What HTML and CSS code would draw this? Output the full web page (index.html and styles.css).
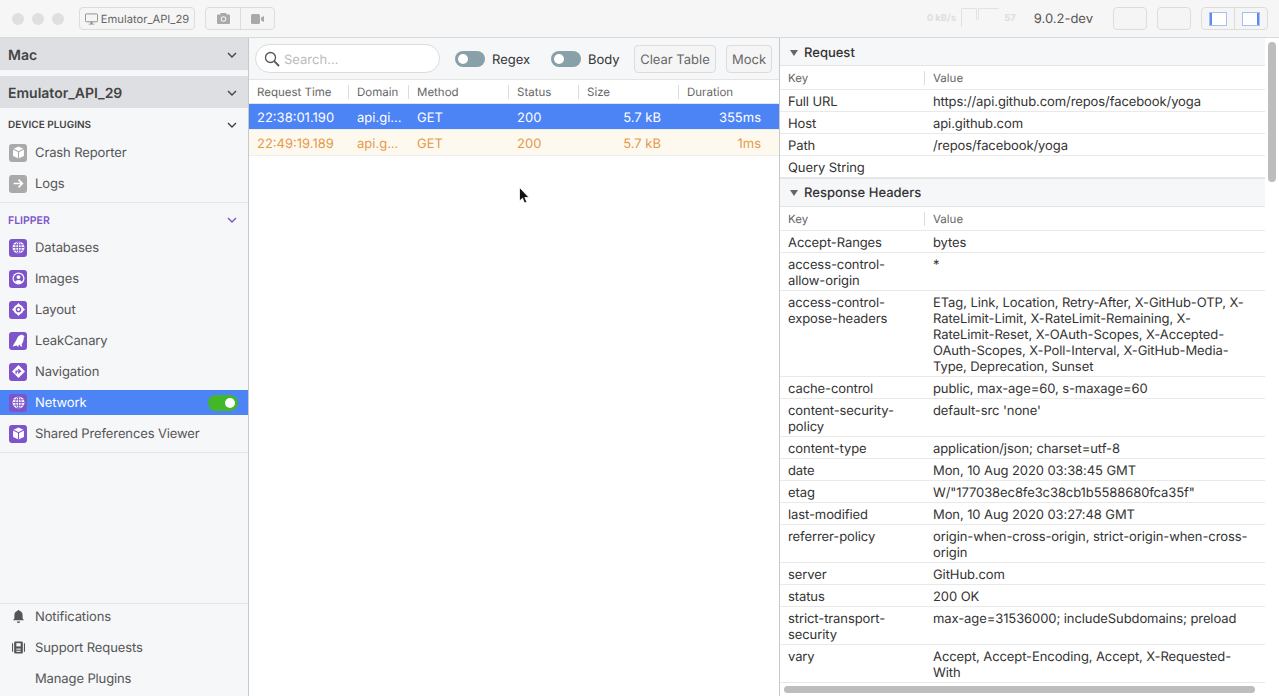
FILE: index.html
```html
<!DOCTYPE html>
<html lang="en">
<head>
<meta charset="utf-8">
<title>Flipper</title>
<link rel="stylesheet" href="styles.css">
</head>
<body>
<div class="app">
  <header class="titlebar">
    <div class="lights"><i></i><i></i><i></i></div>
    <button class="btn device"><svg width="13" height="12" viewBox="0 0 14 12"><path d="M1.500 0.500h11a1 1 0 0 1 1 1v6.500a1 1 0 0 1-1 1h-11a1 1 0 0 1-1-1v-6.500a1 1 0 0 1 1-1z" fill="none" stroke="#8a8a8a"/><path d="M4 11h6v1H4zM6 9h2v2H6z" fill="#8a8a8a"/></svg>Emulator_API_29</button>
    <div class="group">
      <button class="seg cam"><svg width="13" height="11" viewBox="0 0 13 11"><path d="M4 0h5l1 1.500h2a1 1 0 0 1 1 1V10a1 1 0 0 1-1 1H1a1 1 0 0 1-1-1V2.500a1 1 0 0 1 1-1h2z" fill="#a9a9a9"/><circle cx="6.500" cy="6" r="2.800" fill="#f3f3f4"/><circle cx="6.500" cy="6" r="1.800" fill="#a9a9a9"/></svg></button>
      <button class="seg cam"><svg width="13" height="10" viewBox="0 0 13 10"><rect width="9" height="10" rx="1.500" fill="#a9a9a9"/><path d="M10 3.500l3-1.500v6l-3-1.500z" fill="#a9a9a9"/></svg></button>
    </div>
    <div class="spacer"></div>
    <div class="stats">
      <span class="rate">0 kB/s</span>
      <svg width="38" height="20" viewBox="0 0 38 20"><path d="M0.500 20V1.500H15.500V12H17.500V1.500H38" fill="none" stroke="#e2e2e3"/></svg>
      <span class="rate">57</span>
    </div>
    <span class="version">9.0.2-dev</span>
    <button class="btn blank"></button>
    <button class="btn blank"></button>
    <div class="group layout">
      <button class="seg wide"><svg width="18" height="14" viewBox="0 0 18 14"><rect x="0.500" y="0.500" width="17" height="13" fill="#fff" stroke="#a4bff2"/><rect x="1" y="1" width="2" height="12" fill="#5a8cf0"/></svg></button>
      <button class="seg wide"><svg width="18" height="14" viewBox="0 0 18 14"><rect x="0.500" y="0.500" width="17" height="13" fill="#fff" stroke="#a4bff2"/><rect x="15" y="1" width="2" height="12" fill="#5a8cf0"/></svg></button>
    </div>
  </header>

  <div class="main">
    <aside class="sidebar">
      <div class="dev-head">Mac<svg class="chev" viewBox="0 0 10 6"><path d="M1 1l4 4 4-4" fill="none" stroke="#444" stroke-width="1.400"/></svg></div>
      <div class="dev-head second">Emulator_API_29<svg class="chev" viewBox="0 0 10 6"><path d="M1 1l4 4 4-4" fill="none" stroke="#444" stroke-width="1.400"/></svg></div>
      <div class="section">
        <div class="sec-title dark">DEVICE PLUGINS<svg class="chev" viewBox="0 0 10 6"><path d="M1 1l4 4 4-4" fill="none" stroke="#444" stroke-width="1.400"/></svg></div>
        <div class="item"><span class="ico grey"><svg viewBox="0 0 12 12"><path d="M6 .5l5 2.300v6.400l-5 2.300-5-2.300V2.800z" fill="#fff"/><path d="M1 2.800l5 2.400 5-2.400M6 5.200v6.300" fill="none" stroke="#aaa"/></svg></span>Crash Reporter</div>
        <div class="item"><span class="ico grey"><svg viewBox="0 0 12 12"><path d="M1.500 6h8M6 2.500L9.500 6 6 9.500" fill="none" stroke="#fff" stroke-width="1.600"/></svg></span>Logs</div>
      </div>
      <div class="section flipper">
        <div class="sec-title purple">FLIPPER<svg class="chev" viewBox="0 0 10 6"><path d="M1 1l4 4 4-4" fill="none" stroke="#7d54c9" stroke-width="1.400"/></svg></div>
        <div class="item"><span class="ico"><svg viewBox="0 0 12 12"><use href="#globe"/></svg></span>Databases</div>
        <div class="item"><span class="ico"><svg viewBox="0 0 12 12"><circle cx="6" cy="6" r="5.500" fill="#fff"/><circle cx="6" cy="6" r="4.400" fill="#7d54c9"/><circle cx="6" cy="4.700" r="1.800" fill="#fff"/><path d="M2.800 9a3.500 2.600 0 0 1 6.400 0 4.200 4.200 0 0 1-6.400 0z" fill="#fff"/></svg></span>Images</div>
        <div class="item"><span class="ico"><svg viewBox="0 0 12 12"><path d="M6 0l1.400 1.600A4.600 4.600 0 0 1 10.400 4.600L12 6l-1.600 1.400a4.600 4.600 0 0 1-3 3L6 12l-1.400-1.600a4.600 4.600 0 0 1-3-3L0 6l1.600-1.400a4.600 4.600 0 0 1 3-3z" fill="#fff"/><circle cx="6" cy="6" r="2.600" fill="#7d54c9"/><circle cx="6" cy="6" r="1.300" fill="#fff"/></svg></span>Layout</div>
        <div class="item"><span class="ico"><svg viewBox="0 0 12 12"><path d="M.5 11.500L4 5.500C5 3 6.500 1 9 .8c1 0 1.600.5 1.900 1.200l1 .5-1 .6c0 2.400-.6 5-2 6.400l.6 2H8l-.7-1.600-1.300.3.400 1.300H5L4.500 10.500z" fill="#fff"/></svg></span>LeakCanary</div>
        <div class="item"><span class="ico"><svg viewBox="0 0 12 12"><path d="M6 0l6 6-6 6-6-6z" fill="#fff"/><path d="M3.800 8V5.700h3M5.700 3.800L7.800 5.700 5.700 7.700" fill="none" stroke="#7d54c9" stroke-width="1.200"/></svg></span>Navigation</div>
        <div class="item active"><span class="ico"><svg viewBox="0 0 12 12"><use href="#globe"/></svg></span>Network<span class="pill"><i></i></span></div>
        <div class="item"><span class="ico"><svg viewBox="0 0 12 12"><path d="M6 .5l5 2.300v6.400l-5 2.300-5-2.300V2.800z" fill="#fff"/><path d="M1 2.800l5 2.400 5-2.400M6 5.200v6.300" fill="none" stroke="#7d54c9"/></svg></span>Shared Preferences Viewer</div>
      </div>
      <div class="side-fill"></div>
      <div class="side-bottom">
        <div class="item"><span class="ico plain"><svg viewBox="0 0 12 12"><path d="M6 0c.6 0 1 .4 1 1 2 .5 2.800 2 2.800 4v2.500L11 9.500H1l1.200-2V5c0-2 .8-3.500 2.800-4 0-.6.4-1 1-1zM4.500 10.500h3a1.500 1.500 0 0 1-3 0z" fill="#555"/></svg></span>Notifications</div>
        <div class="item"><span class="ico plain"><svg viewBox="0 0 12 12"><path d="M0 2h1v8H0zM11 2h1v8h-1z" fill="#555"/><rect x="2" y="0.500" width="8" height="11" rx="1" fill="#555"/><rect x="4" y="2" width="4" height="3" fill="#f6f7f9"/><rect x="4" y="7" width="4" height="1" fill="#f6f7f9"/><rect x="4" y="9" width="4" height="1" fill="#f6f7f9"/></svg></span>Support Requests</div>
        <div class="item"><span class="ico plain"></span>Manage Plugins</div>
      </div>
    </aside>

    <section class="center">
      <div class="toolbar">
        <div class="search"><svg width="16" height="16" viewBox="0 0 16 16"><circle cx="6.500" cy="6.500" r="5" fill="none" stroke="#555" stroke-width="1.300"/><path d="M10.200 10.200L15 15" stroke="#555" stroke-width="1.800"/></svg><span class="lbl">Search...</span></div>
        <label class="toggle"><span class="sw"><i></i></span><span class="lbl">Regex</span></label>
        <label class="toggle"><span class="sw"><i></i></span><span class="lbl">Body</span></label>
        <button class="btn action clear"><span class="lbl">Clear Table</span></button>
        <button class="btn action mock"><span class="lbl">Mock</span></button>
      </div>
      <div class="thead">
        <div class="th c1">Request Time</div>
        <div class="th c2">Domain</div>
        <div class="th c3">Method</div>
        <div class="th c4">Status</div>
        <div class="th c5">Size</div>
        <div class="th c6">Duration</div>
      </div>
      <div class="tr sel">
        <div class="td c1">22:38:01.190</div>
        <div class="td c2">api.gi...</div>
        <div class="td c3">GET</div>
        <div class="td c4">200</div>
        <div class="td c5 num">5.7 kB</div>
        <div class="td c6 num">355ms</div>
      </div>
      <div class="tr warn">
        <div class="td c1">22:49:19.189</div>
        <div class="td c2">api.g...</div>
        <div class="td c3">GET</div>
        <div class="td c4">200</div>
        <div class="td c5 num">5.7 kB</div>
        <div class="td c6 num">1ms</div>
      </div>
    </section>

    <section class="detail">
      <div class="panel-head first"><b class="tri"></b>Request</div>
      <div class="kv head"><div class="k">Key</div><div class="v">Value</div></div>
      <div class="kv"><div class="k">Full URL</div><div class="v">https://api.github.com/repos/facebook/yoga</div></div>
      <div class="kv"><div class="k">Host</div><div class="v">api.github.com</div></div>
      <div class="kv"><div class="k">Path</div><div class="v">/repos/facebook/yoga</div></div>
      <div class="kv"><div class="k">Query String</div><div class="v"></div></div>
      <div class="panel-head"><b class="tri"></b>Response Headers</div>
      <div class="kv head"><div class="k">Key</div><div class="v">Value</div></div>
      <div class="kv"><div class="k">Accept-Ranges</div><div class="v">bytes</div></div>
      <div class="kv"><div class="k">access-control-<br>allow-origin</div><div class="v">*</div></div>
      <div class="kv"><div class="k">access-control-<br>expose-headers</div><div class="v">ETag, Link, Location, Retry-After, X-GitHub-OTP, X-<br>RateLimit-Limit, X-RateLimit-Remaining, X-<br>RateLimit-Reset, X-OAuth-Scopes, X-Accepted-<br>OAuth-Scopes, X-Poll-Interval, X-GitHub-Media-<br>Type, Deprecation, Sunset</div></div>
      <div class="kv"><div class="k">cache-control</div><div class="v">public, max-age=60, s-maxage=60</div></div>
      <div class="kv"><div class="k">content-security-<br>policy</div><div class="v">default-src 'none'</div></div>
      <div class="kv"><div class="k">content-type</div><div class="v">application/json; charset=utf-8</div></div>
      <div class="kv"><div class="k">date</div><div class="v">Mon, 10 Aug 2020 03:38:45 GMT</div></div>
      <div class="kv"><div class="k">etag</div><div class="v">W/"177038ec8fe3c38cb1b5588680fca35f"</div></div>
      <div class="kv"><div class="k">last-modified</div><div class="v">Mon, 10 Aug 2020 03:27:48 GMT</div></div>
      <div class="kv"><div class="k">referrer-policy</div><div class="v">origin-when-cross-origin, strict-origin-when-cross-<br>origin</div></div>
      <div class="kv"><div class="k">server</div><div class="v">GitHub.com</div></div>
      <div class="kv"><div class="k">status</div><div class="v">200 OK</div></div>
      <div class="kv"><div class="k">strict-transport-<br>security</div><div class="v">max-age=31536000; includeSubdomains; preload</div></div>
      <div class="kv"><div class="k">vary</div><div class="v">Accept, Accept-Encoding, Accept, X-Requested-<br>With</div></div>
      <div class="vbar"></div>
      <div class="hbar"></div>
    </section>
  </div>

  <svg class="cursor" width="11" height="17" viewBox="0 0 11 17"><path d="M.5.500v13.500l3-2.800 2 4.800 2.300-1-2-4.500h4.200z" fill="#111" stroke="#fff" stroke-width=".8"/></svg>
  <svg class="defs" width="0" height="0"><defs><g id="globe"><circle cx="6" cy="6" r="5.500" fill="#fff"/><g fill="none" stroke="#7d54c9" stroke-width=".8"><ellipse cx="6" cy="6" rx="2.500" ry="5.500"/><path d="M6 .5v11M.5 6h11M1.300 3.500h9.400M1.300 8.500h9.400"/></g></g></defs></svg>
</div>
</body>
</html>
```
FILE: styles.css
```css
* { box-sizing: border-box; }
html, body { margin: 0; height: 100%; overflow: hidden; }
body { font-family: Inter, "Liberation Sans", sans-serif; font-size: 13px; color: #333; background: #fff; text-rendering: geometricPrecision; }
button { font: inherit; margin: 0; padding: 0; text-rendering: geometricPrecision; }
.app { position: relative; width: 1279px; height: 696px; display: flex; flex-direction: column; }

.titlebar { height: 38px; flex: none; display: flex; align-items: center; padding: 0 11px 0 12px; background: #f6f6f7; border-bottom: 1px solid #d9d9da; }
.lights { display: flex; gap: 8px; margin-right: 15px; }
.lights i { width: 12px; height: 12px; border-radius: 50%; background: #dfdfe0; }
.btn { display: flex; align-items: center; justify-content: center; border: 1px solid #dcdcdd; border-radius: 4px; background: #f5f5f6; color: #666; white-space: nowrap; }
.device { width: 116px; height: 23px; gap: 3px; font-size: 11.200px; margin-right: 10px; }
.group { display: flex; height: 23px; border: 1px solid #dcdcdd; border-radius: 4px; background: #f5f5f6; }
.seg { width: 34px; background: none; border: 0; display: flex; align-items: center; justify-content: center; }
.seg + .seg { border-left: 1px solid #dcdcdd; }
.spacer { flex: 1; }
.stats { display: flex; align-items: center; gap: 5px; margin-right: 18px; }
.stats svg { margin-top: -3px; }
.rate { font-size: 9.500px; font-weight: 700; color: #dedede; }
.version { font-size: 13px; color: #555; margin-right: 20px; }
.blank { width: 34px; height: 23px; margin-right: 10px; }
.layout { width: 67px; }
.wide { flex: 1; width: auto; }

.main { flex: 1; min-height: 0; display: flex; }

.sidebar { width: 249px; flex: none; display: flex; flex-direction: column; background: #f6f7f9; border-right: 1px solid #c9c9ca; color: #555; }
.dev-head { height: 32px; flex: none; display: flex; align-items: center; justify-content: space-between; padding: 2px 11px 0 8px; background: #dedfe3; font-size: 14px; font-weight: 600; color: #444; }
.dev-head.second { margin-top: 6px; }
.chev { width: 10px; height: 6px; }
.section { border-bottom: 1px solid #e3e4e6; padding-bottom: 3px; }
.sec-title { height: 29px; padding: 5px 11px 0 8px; display: flex; align-items: center; justify-content: space-between; font-size: 10.500px; font-weight: 600; color: #444; }
.dark { font-size: 10px; }
.purple { color: #7d54c9; }
.item { height: 31px; display: flex; align-items: center; padding: 0 11px 0 9px; font-size: 13px; letter-spacing: -.12px; color: #555; white-space: nowrap; }
.ico { width: 18px; height: 18px; flex: none; margin-right: 8px; border-radius: 3px; background: #7d54c9; display: flex; align-items: center; justify-content: center; }
.ico svg { width: 13px; height: 13px; }
.ico.grey { background: #aaa; }
.ico.plain { background: none; }
.item.active { height: 25px; margin: 3px 0; background: #4d84f5; color: #fff; }
.pill { margin-left: auto; width: 30px; height: 16px; border-radius: 8px; background: #42b72a; display: flex; align-items: center; justify-content: flex-end; padding-right: 3px; margin-right: -1px; }
.pill i { width: 10px; height: 10px; border-radius: 50%; background: #fff; }
.side-fill { flex: 1; }
.side-bottom { display: flex; flex-direction: column; gap: 6px; border-top: 1px solid #e3e4e6; padding-bottom: 5px; }
.side-bottom .item { height: 25px; }

.center { width: 531px; flex: none; display: flex; flex-direction: column; background: #fff; border-right: 1px solid #c9c9ca; }
.toolbar { height: 42px; flex: none; display: flex; align-items: center; padding: 0 6px; background: #f6f7f9; border-bottom: 1px solid #e3e4e6; white-space: nowrap; }
.lbl { padding-top: 2px; }
.search { width: 185px; flex: none; height: 29px; display: flex; align-items: center; gap: 4px; padding: 0 8px; background: #fff; border: 1px solid #dcdcdd; border-radius: 15px; color: #bbb; margin-right: 15px; }
.toggle { display: flex; align-items: center; gap: 7px; color: #333; width: 96px; flex: none; }
.toggle + .toggle { width: 83px; }
.sw { width: 30px; height: 16px; border-radius: 8px; background: #88a1a8; display: flex; align-items: center; padding-left: 3px; flex: none; }
.sw i { width: 10px; height: 10px; border-radius: 50%; background: #fff; }
.action { height: 28px; flex: none; color: #666; }
.clear { width: 82px; margin-right: 10px; }
.mock { width: 46px; }
.thead { height: 24px; flex: none; display: flex; align-items: center; border-bottom: 1px solid #e3e4e6; }
.th { height: 14px; display: flex; align-items: center; padding-left: 8px; font-size: 11.500px; color: #666; border-right: 1px solid #dcdcdd; white-space: nowrap; }
.th.c6 { border-right: 0; }
.tr { height: 26px; flex: none; display: flex; align-items: center; border-bottom: 1px solid #eeeeef; }
.td { padding: 2px 8px 0; white-space: nowrap; }
.c1 { width: 100px; }
.c2 { width: 60px; }
.c3 { width: 100px; }
.c4 { width: 70px; }
.c5 { width: 100px; }
.c6 { flex: 1; }
.td.num { text-align: right; padding-right: 18px; }
.sel { background: #4d84f5; color: #fff; }
.warn { background: #fef9ef; color: #e49a4a; }

.detail { position: relative; flex: 1; min-width: 0; overflow: hidden; background: #fff; }
.panel-head { width: 485px; height: 29px; display: flex; align-items: center; padding: 1px 0 0 10px; background: #f6f7f9; font-weight: 500; color: #333; border-bottom: 1px solid #e3e4e6; border-top: 1px solid #e3e4e6; }
.panel-head.first { height: 28px; padding-top: 2px; border-top: 0; }
.tri { width: 0; height: 0; margin-right: 6px; border-left: 4.500px solid transparent; border-right: 4.500px solid transparent; border-top: 6px solid #666; }
.kv { width: 485px; display: flex; padding: 4px 0 1px; border-bottom: 1px solid #e9e9ea; line-height: 16px; color: #333; letter-spacing: -.09px; }
.k { width: 145px; flex: none; padding-left: 8px; }
.v { flex: 1; padding-left: 8px; white-space: nowrap; }
.kv:not(.head) { min-height: 22px; }
.kv.head { height: 24px; align-items: center; padding: 0; font-size: 11.500px; color: #666; letter-spacing: 0; }
.kv.head .k { width: 144px; }
.kv.head .v { height: 14px; line-height: 14px; border-left: 1px solid #dcdcdd; }
.vbar { position: absolute; left: 488px; top: 4px; width: 8px; height: 140px; border-radius: 4px; background: #bdbdbd; }
.hbar { position: absolute; left: 4px; top: 648px; width: 471px; height: 7px; border-radius: 4px; background: #bdbdbd; }

.cursor { position: absolute; left: 519px; top: 187px; }
.defs { position: absolute; }
```
